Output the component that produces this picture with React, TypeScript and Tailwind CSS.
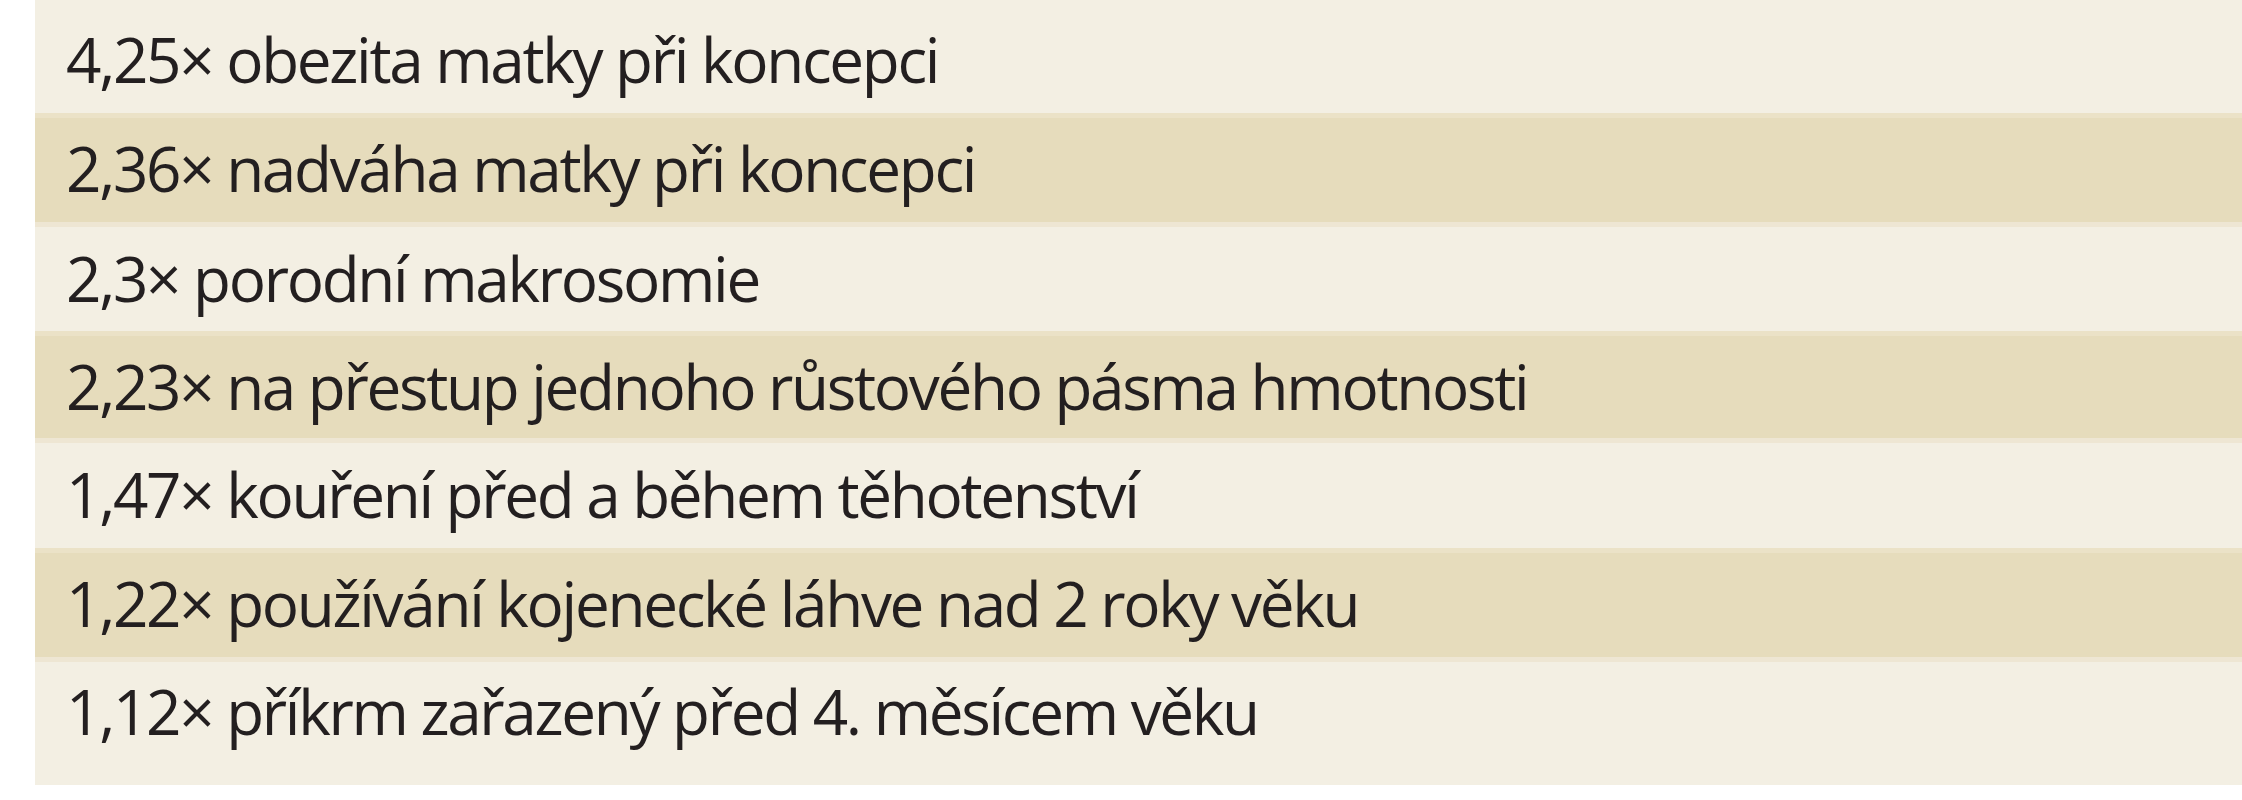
const rows = [
  { text: "4,25× obezita matky při koncepci", dark: false, h: "h-[113px]", pt: "pt-[28px]" },
  { text: "2,36× nadváha matky při koncepci", dark: true, h: "h-[114px]", pt: "pt-[19px]" },
  { text: "2,3× porodní makrosomie", dark: false, h: "h-[104px]", pt: "pt-[20px]" },
  { text: "2,23× na přestup jednoho růstového pásma hmotnosti", dark: true, h: "h-[112px]", pt: "pt-[19px]" },
  { text: "1,47× kouření před a během těhotenství", dark: false, h: "h-[105px]", pt: "pt-[20px]" },
  { text: "1,22× používání kojenecké láhve nad 2 roky věku", dark: true, h: "h-[114px]", pt: "pt-[19px]" },
  { text: "1,12× příkrm zařazený před 4. měsícem věku", dark: false, h: "h-[123px]", pt: "pt-[18px]" },
]

export default function App() {
  return (
    <div className="w-full h-[800px] bg-white pl-[35px] font-['Open_Sans',sans-serif]">
      <div className="flex flex-col">
        {rows.map((row) => (
          <div
            key={row.text}
            className={
              row.dark
                ? `${row.h} ${row.pt} box-border border-t-[5px] border-b-[5px] border-t-[#ebe2c7] border-b-[#eee6d3] bg-[#e6dcbc] pl-[31px]`
                : `${row.h} ${row.pt} box-border bg-[#f3efe3] pl-[31px]`
            }
          >
            <p className="text-[62px] leading-none tracking-[-2.3px] text-[#231f20] whitespace-nowrap">{row.text}</p>
          </div>
        ))}
      </div>
    </div>
  )
}
